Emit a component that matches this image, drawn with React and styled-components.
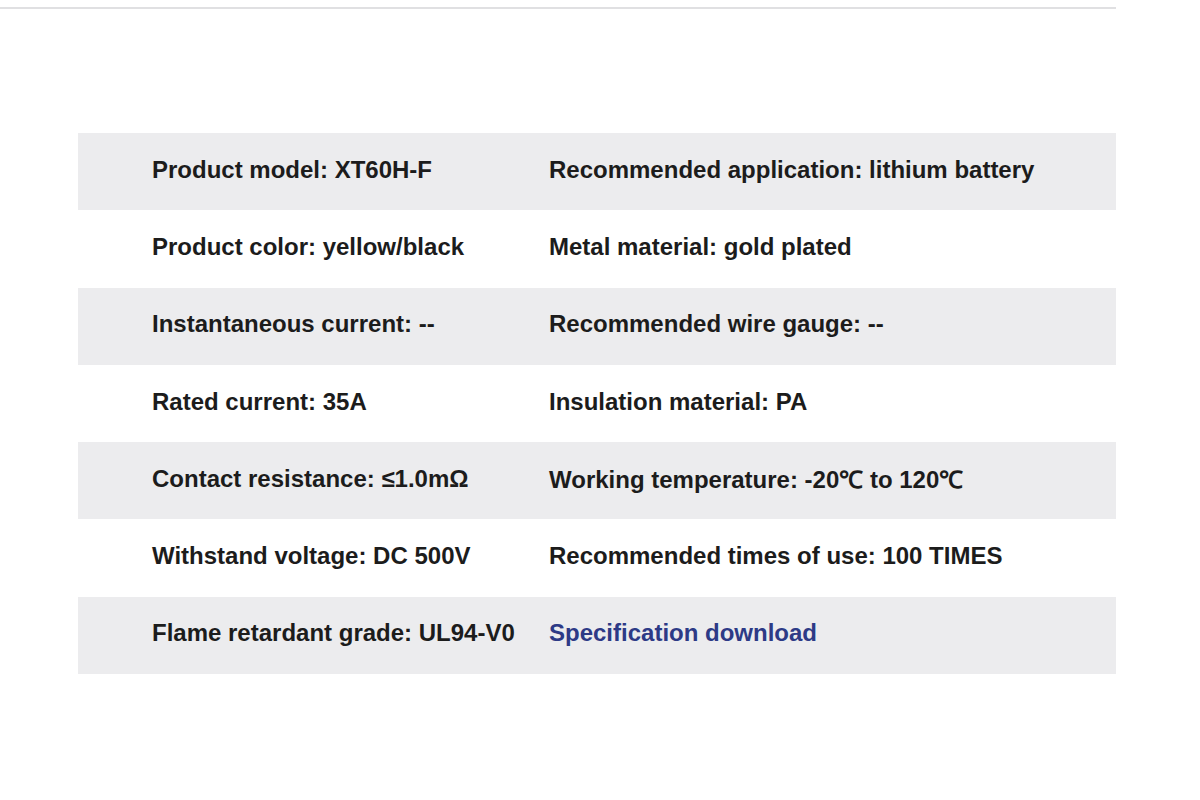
import styled, { createGlobalStyle } from "styled-components";

const GlobalStyle = createGlobalStyle`
  html, body {
    margin: 0;
    padding: 0;
    background: #ffffff;
  }
  body {
    font-family: "Liberation Sans", Arial, sans-serif;
  }
`;

const specs = [
  ["Product model: XT60H-F", "Recommended application: lithium battery"],
  ["Product color: yellow/black", "Metal material: gold plated"],
  ["Instantaneous current: --", "Recommended wire gauge: --"],
  ["Rated current: 35A", "Insulation material: PA"],
  ["Contact resistance: ≤1.0mΩ", "Working temperature: -20℃ to 120℃"],
  ["Withstand voltage: DC 500V", "Recommended times of use: 100 TIMES"],
  ["Flame retardant grade: UL94-V0", null],
];

const App = () => {
  return (
    <Page>
      <GlobalStyle />
      <TopRule />
      <SpecTable>
        {specs.map(([left, right], index) => (
          <SpecRow key={index} $shaded={index % 2 === 0}>
            <SpecCell>{left}</SpecCell>
            {right ? (
              <SpecCell>{right}</SpecCell>
            ) : (
              <DownloadLink href="#">Specification download</DownloadLink>
            )}
          </SpecRow>
        ))}
      </SpecTable>
    </Page>
  );
};

const Page = styled.main`
  width: 1200px;
  height: 800px;
  padding-top: 7px;
  box-sizing: border-box;
`;

const TopRule = styled.div`
  width: 1116px;
  height: 2px;
  background: #e0e0e2;
`;

const SpecTable = styled.section`
  margin: 124px 0 0 78px;
  width: 1038px;
  display: flex;
  flex-direction: column;
`;

const SpecRow = styled.div`
  display: grid;
  grid-template-columns: 397px 1fr;
  align-items: center;
  height: 77.3px;
  padding: 0 0 4px 74px;
  box-sizing: border-box;
  background: ${({ $shaded }) => ($shaded ? "#ececee" : "#ffffff")};
`;

const SpecCell = styled.span`
  font-size: 24px;
  font-weight: bold;
  color: #1c1c1c;
  white-space: nowrap;
`;

const DownloadLink = styled.a`
  font-size: 24px;
  font-weight: bold;
  color: #2d3a86;
  text-decoration: none;
  white-space: nowrap;
`;

export default App;
